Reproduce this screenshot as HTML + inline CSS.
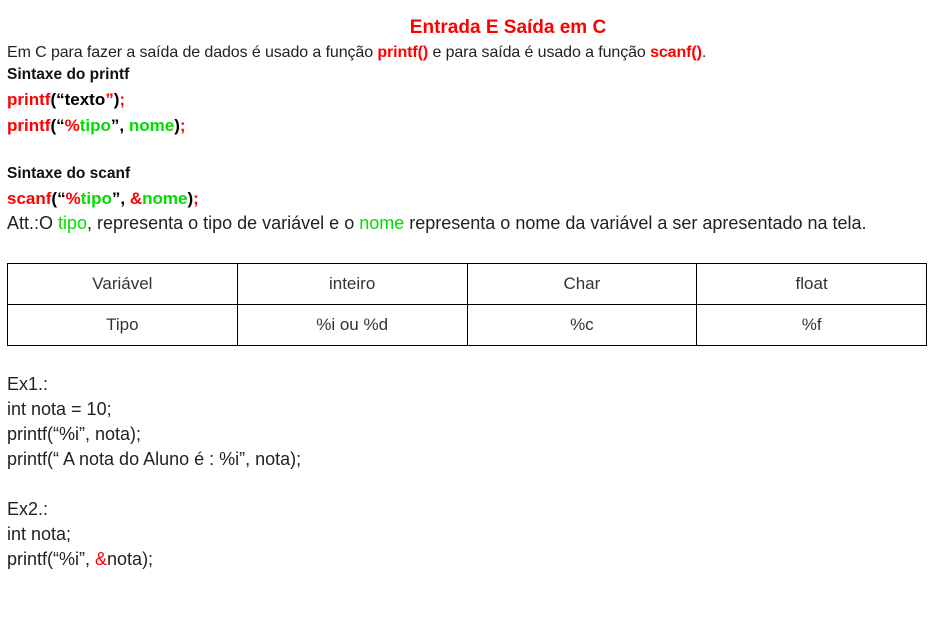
<!DOCTYPE html>
<html><head><meta charset="utf-8"><style>
body{margin:0;background:#fff;font-family:"Liberation Sans",Arial,sans-serif;color:#222;}
.a{position:absolute;left:7px;white-space:nowrap;}
.r{color:#f00}.g{color:#0d0}.k{color:#000}
b{font-weight:bold}
table{position:absolute;left:7px;top:263px;width:920px;border-collapse:collapse;}
td{border:1px solid #000;height:40px;text-align:center;font-size:17px;color:#333;width:25%;padding:0}
</style></head><body>
<div class="a" style="left:0;width:1016px;text-align:center;top:17px;font-size:19px;font-weight:bold;color:#f00">Entrada E Saída em C</div>
<div class="a" style="top:44px;font-size:16px;letter-spacing:-0.1px">Em C para fazer a saída de dados é usado a função <b class="r">printf()</b> e para saída é usado a função <b class="r">scanf()</b>.</div>
<div class="a" style="top:66px;font-size:15.5px;font-weight:bold;color:#111">Sintaxe do printf</div>
<div class="a" style="top:90px;font-size:17px;font-weight:bold"><span class="r">printf</span><span class="k">(“texto</span><span class="r">”</span><span class="k">)</span><span class="r">;</span></div>
<div class="a" style="top:116px;font-size:17px;font-weight:bold"><span class="r">printf</span><span class="k">(“</span><span class="r">%</span><span class="g">tipo</span><span class="k">”, </span><span class="g">nome</span><span class="k">)</span><span class="r">;</span></div>
<div class="a" style="top:165px;font-size:15.5px;font-weight:bold;color:#111">Sintaxe do scanf</div>
<div class="a" style="top:189px;font-size:17px;font-weight:bold"><span class="r">scanf</span><span class="k">(“</span><span class="r">%</span><span class="g">tipo</span><span class="k">”, </span><span class="r">&amp;</span><span class="g">nome</span><span class="k">)</span><span class="r">;</span></div>
<div class="a" style="top:213px;font-size:18px">Att.:O <span class="g">tipo</span>, representa o tipo de variável e o <span class="g">nome</span> representa o nome da variável a ser apresentado na tela.</div>
<table><tr><td>Variável</td><td>inteiro</td><td>Char</td><td>float</td></tr>
<tr><td>Tipo</td><td>%i ou %d</td><td>%c</td><td>%f</td></tr></table>
<div class="a" style="top:372px;font-size:18px;line-height:25px">Ex1.:<br>int nota = 10;<br>printf(“%i”, nota);<br>printf(“ A nota do Aluno é : %i”, nota);<br><br>Ex2.:<br>int nota;<br>printf(“%i”, <span class="r">&amp;</span>nota);</div>
</body></html>
